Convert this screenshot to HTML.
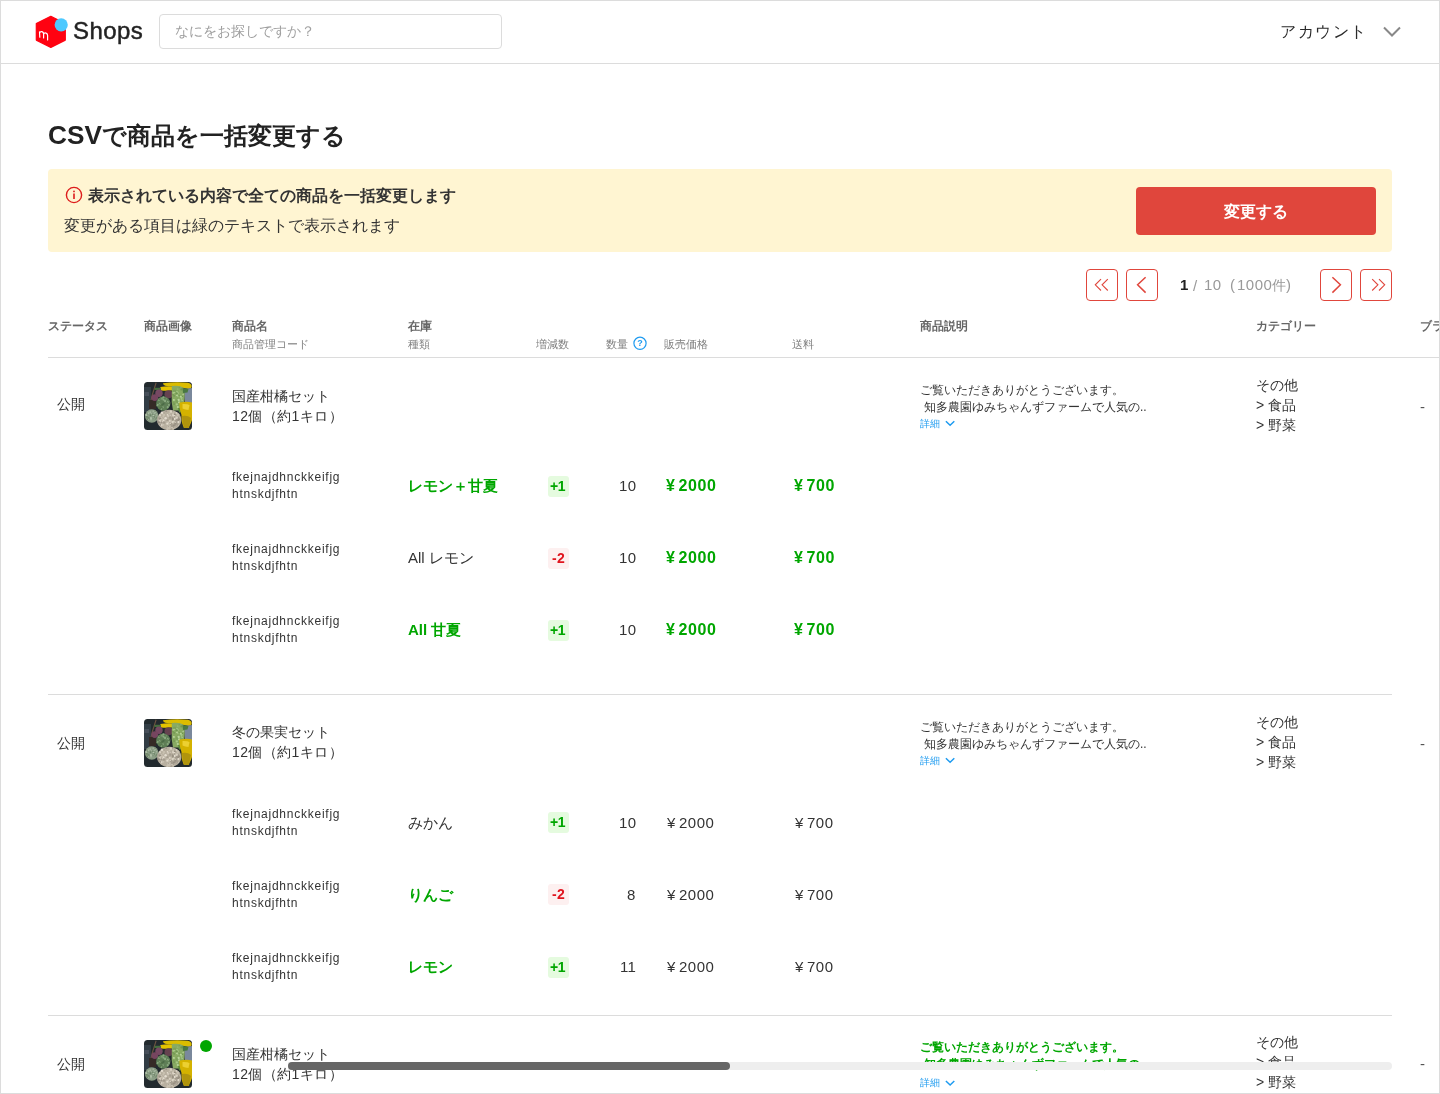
<!DOCTYPE html>
<html lang="ja"><head><meta charset="utf-8"><title>CSVで商品を一括変更する</title>
<style>
html,body{margin:0;padding:0;background:#fff;}
body{width:1440px;height:1094px;overflow:hidden;position:relative;font-family:"Liberation Sans",sans-serif;color:#333;}
.t{position:absolute;white-space:nowrap;will-change:transform;}
.box{position:absolute;box-sizing:border-box;}
svg{position:absolute;overflow:visible;}
</style></head><body>

<div class="box" style="left:0;top:0;width:1440px;height:1094px;border:1px solid #dcdcdc;"></div>
<div class="box" style="left:0;top:63px;width:1440px;height:1px;background:#dcdcdc;"></div>
<svg style="left:0;top:0" width="200" height="64" viewBox="0 0 200 64">
<path d="M50.8 16.3 L65.3 23.6 L65.3 40.1 L50.8 47.4 L36.3 40.1 L36.3 23.6 Z" fill="#ff0211" stroke="#ff0211" stroke-width="1.2" stroke-linejoin="round"/>
<circle cx="61.2" cy="24.8" r="6.6" fill="#4dc9ff"/>
<path d="M39.8 37.2 L39.5 31.8 M39.6 33.2 Q40 31.3 42 31.7 Q43.7 32.2 43.6 34.3 L43.6 38 M43.6 34.3 Q44.2 32.5 46 33.1 Q47.6 33.6 47.6 35.6 L47.6 40" fill="none" stroke="#fff" stroke-width="1.2" stroke-linecap="round"/>
</svg>
<div class="t" style="left:73px;top:16.4px;font-size:24px;line-height:30px;color:#222;font-weight:normal;letter-spacing:0.4px;-webkit-text-stroke:0.45px #222;">Shops</div>
<div class="box" style="left:159px;top:14px;width:343px;height:35px;border:1px solid #dcdcdc;border-radius:4px;"></div>
<div class="t" style="left:175px;top:21.0px;font-size:14px;line-height:20px;color:#a0a0a0;font-weight:normal;">なにをお探しですか？</div>
<div class="t" style="left:1280px;top:20.5px;font-size:16px;line-height:22px;color:#2a2a2a;font-weight:normal;letter-spacing:1.5px">アカウント</div>
<svg style="left:0;top:0" width="1440" height="64"><polyline points="1384,27.5 1392,35.5 1400,27.5" fill="none" stroke="#888" stroke-width="2"/></svg>
<div class="t" style="left:48px;top:120.0px;font-size:23.7px;line-height:30px;color:#222;font-weight:bold;"><span style="font-size:26.2px">CSV</span>で商品を一括変更する</div>
<div class="box" style="left:48px;top:169px;width:1344px;height:83px;background:#fff5d2;border-radius:4px;"></div>
<svg style="left:0;top:0" width="200" height="260"><circle cx="74" cy="195" r="7.6" fill="none" stroke="#dd1c1c" stroke-width="1.4"/><circle cx="74" cy="191.4" r="0.9" fill="#dd1c1c"/><line x1="74" y1="193.5" x2="74" y2="199" stroke="#dd1c1c" stroke-width="1.6"/></svg>
<div class="t" style="left:88px;top:184.6px;font-size:16px;line-height:22px;color:#333;font-weight:bold;">表示されている内容で全ての商品を一括変更します</div>
<div class="t" style="left:64px;top:214.5px;font-size:16px;line-height:22px;color:#333;font-weight:normal;">変更がある項目は緑のテキストで表示されます</div>
<div class="box" style="left:1136px;top:187px;width:240px;height:48px;background:#e0463c;border-radius:4px;"></div>
<div class="t" style="left:1136px;top:187.5px;width:240px;height:48px;line-height:48px;text-align:center;color:#fff;font-weight:bold;font-size:16px;">変更する</div>
<div class="box" style="left:1086px;top:269px;width:32px;height:32px;border:1px solid #e0463c;border-radius:4px;"></div>
<div class="box" style="left:1126px;top:269px;width:32px;height:32px;border:1px solid #e0463c;border-radius:4px;"></div>
<div class="box" style="left:1320px;top:269px;width:32px;height:32px;border:1px solid #e0463c;border-radius:4px;"></div>
<div class="box" style="left:1360px;top:269px;width:32px;height:32px;border:1px solid #e0463c;border-radius:4px;"></div>
<svg style="left:0;top:0" width="1440" height="320" fill="none" stroke="#e0463c">
<polyline points="1101,279.2 1095.3,284.8 1101,290.5" stroke-width="1.1"/>
<polyline points="1107.8,279.2 1102.1,284.8 1107.8,290.5" stroke-width="1.1"/>
<polyline points="1145.6,277.2 1137.6,284.8 1145.6,292.6" stroke-width="1.5"/>
<polyline points="1332.4,277.2 1340.4,284.8 1332.4,292.6" stroke-width="1.5"/>
<polyline points="1372.2,279.2 1377.9,284.8 1372.2,290.5" stroke-width="1.1"/>
<polyline points="1379,279.2 1384.7,284.8 1379,290.5" stroke-width="1.1"/>
</svg>
<div class="t" style="left:1179.5px;top:274.0px;font-size:15px;line-height:21px;color:#222;font-weight:bold;">1</div>
<div class="t" style="left:1192.5px;top:274.5px;font-size:15px;line-height:21px;color:#999;font-weight:normal;">/</div>
<div class="t" style="left:1204.2px;top:274.0px;font-size:15px;line-height:21px;color:#999;font-weight:normal;letter-spacing:0.5px">10</div>
<div class="t" style="left:1229.5px;top:274.0px;font-size:15px;line-height:21px;color:#999;font-weight:normal;">(</div>
<div class="t" style="left:1236.5px;top:274.0px;font-size:15px;line-height:21px;color:#999;font-weight:normal;letter-spacing:0.5px">1000</div>
<div class="t" style="left:1271.5px;top:274.5px;font-size:14px;line-height:20px;color:#999;font-weight:normal;">件</div>
<div class="t" style="left:1286px;top:274.0px;font-size:15px;line-height:21px;color:#999;font-weight:normal;">)</div>
<div class="t" style="left:48px;top:317.0px;font-size:12px;line-height:18px;color:#666;font-weight:bold;">ステータス</div>
<div class="t" style="left:144px;top:317.0px;font-size:12px;line-height:18px;color:#666;font-weight:bold;">商品画像</div>
<div class="t" style="left:232px;top:317.0px;font-size:12px;line-height:18px;color:#666;font-weight:bold;">商品名</div>
<div class="t" style="left:232px;top:335.5px;font-size:11px;line-height:17px;color:#808080;font-weight:normal;">商品管理コード</div>
<div class="t" style="left:408px;top:317.0px;font-size:12px;line-height:18px;color:#666;font-weight:bold;">在庫</div>
<div class="t" style="left:408px;top:335.5px;font-size:11px;line-height:17px;color:#808080;font-weight:normal;">種類</div>
<div class="t" style="left:536px;top:335.5px;font-size:11px;line-height:17px;color:#808080;font-weight:normal;">増減数</div>
<div class="t" style="left:606px;top:335.5px;font-size:11px;line-height:17px;color:#808080;font-weight:normal;">数量</div>
<svg style="left:0;top:0" width="1440" height="360"><circle cx="640" cy="343.3" r="6.1" fill="none" stroke="#1e9bf0" stroke-width="1.2"/></svg>
<div class="t" style="left:634px;top:336px;width:12px;text-align:center;font-size:9px;line-height:14px;font-weight:bold;color:#1e9bf0">?</div>
<div class="t" style="left:664px;top:335.5px;font-size:11px;line-height:17px;color:#808080;font-weight:normal;">販売価格</div>
<div class="t" style="left:792px;top:335.5px;font-size:11px;line-height:17px;color:#808080;font-weight:normal;">送料</div>
<div class="t" style="left:920px;top:317.0px;font-size:12px;line-height:18px;color:#666;font-weight:bold;">商品説明</div>
<div class="t" style="left:1256px;top:317.0px;font-size:12px;line-height:18px;color:#666;font-weight:bold;">カテゴリー</div>
<div class="t" style="left:1420px;top:317.0px;font-size:12px;line-height:18px;color:#666;font-weight:bold;">ブランド</div>
<div class="box" style="left:48px;top:357px;width:1392px;height:1px;background:#dcdcdc;"></div>
<div class="t" style="left:57px;top:394.0px;font-size:14px;line-height:20px;color:#333333;font-weight:normal;">公開</div>
<svg style="left:144px;top:382px" width="48" height="48" viewBox="0 0 48 48">
<defs><clipPath id="c144382"><rect width="48" height="48" rx="3.5"/></clipPath><filter id="b144382" x="-20%" y="-20%" width="140%" height="140%"><feGaussianBlur stdDeviation="0.45"/></filter></defs>
<g clip-path="url(#c144382)"><g filter="url(#b144382)"><rect width="48" height="48" fill="#242a2f"/><rect x="0" y="5" width="7" height="25" fill="#323c45"/><rect x="0.5" y="10" width="4.5" height="4" fill="#46505a"/><path d="M11.6 0.5 L12.6 1 L8.5 14 L6 26.5 L5 26 L7.5 13.5 Z" fill="#6e5440"/><rect x="5" y="18" width="7" height="9" fill="#352b28"/><path d="M19 1.2 Q32 -0.5 44 0.8 Q48.5 2 47.5 5.5 Q46 7.5 43 6.5 Q32 4.2 23 4 Q19 3.5 19 1.2 Z" fill="#dcbc00"/><path d="M16.5 5 Q23 3.8 30 4.5 L30.5 8.3 Q23 9.2 16.5 8.4 Q15.5 6.7 16.5 5 Z" fill="#e4c200"/><rect x="10.5" y="5.8" width="6.5" height="2.2" fill="#456e3c"/><circle cx="15" cy="11.3" r="3.7" fill="#774a63"/><circle cx="24.5" cy="12.2" r="4" fill="#654350"/><circle cx="10.8" cy="15.6" r="3.4" fill="#76445f"/><path d="M40 7 L48 6 L48 21 L41 21 Z" fill="#7a889c"/><path d="M27.8 4 Q36 3 39.5 6 Q41.5 12 40.5 18 Q40 25 36 28.5 L29 28.5 Q27 20 27.8 11 Z" fill="#88aa62"/><circle cx="34.3" cy="24.1" r="0.80" fill="#7ca05a"/><circle cx="33.0" cy="14.0" r="0.51" fill="#7ca05a"/><circle cx="33.8" cy="21.3" r="1.30" fill="#7ca05a"/><circle cx="30.1" cy="13.9" r="0.82" fill="#6e9450"/><circle cx="34.2" cy="20.3" r="1.24" fill="#7ca05a"/><circle cx="33.8" cy="7.0" r="0.55" fill="#a8c886"/><circle cx="33.7" cy="17.8" r="1.19" fill="#7ca05a"/><circle cx="29.6" cy="10.1" r="0.81" fill="#7ca05a"/><circle cx="30.1" cy="22.0" r="0.86" fill="#6e9450"/><circle cx="35.2" cy="13.6" r="0.61" fill="#6e9450"/><circle cx="33.8" cy="25.0" r="1.12" fill="#b8d49a"/><circle cx="29.6" cy="20.8" r="0.96" fill="#7ca05a"/><circle cx="29.5" cy="10.7" r="1.05" fill="#a8c886"/><circle cx="37.4" cy="7.4" r="1.04" fill="#6e9450"/><circle cx="33.0" cy="10.0" r="0.93" fill="#a8c886"/><circle cx="33.4" cy="11.1" r="1.17" fill="#b8d49a"/><circle cx="33.7" cy="18.7" r="1.18" fill="#7ca05a"/><circle cx="38.2" cy="21.2" r="0.83" fill="#6e9450"/><circle cx="37.6" cy="16.9" r="0.83" fill="#a8c886"/><circle cx="38.1" cy="18.4" r="0.54" fill="#b8d49a"/><circle cx="29.0" cy="12.7" r="0.72" fill="#6e9450"/><circle cx="37.1" cy="15.9" r="0.56" fill="#a8c886"/><circle cx="39.1" cy="12.6" r="0.73" fill="#b8d49a"/><circle cx="34.6" cy="17.9" r="1.19" fill="#b8d49a"/><circle cx="32.7" cy="19.1" r="1.19" fill="#7ca05a"/><circle cx="30.2" cy="18.0" r="1.02" fill="#a8c886"/><circle cx="30.1" cy="8.7" r="0.91" fill="#7ca05a"/><circle cx="30.9" cy="9.0" r="1.25" fill="#7ca05a"/><circle cx="37.9" cy="14.9" r="0.94" fill="#a8c886"/><circle cx="35.3" cy="5.4" r="0.75" fill="#7ca05a"/><circle cx="30.7" cy="10.2" r="0.55" fill="#b8d49a"/><circle cx="29.6" cy="17.9" r="0.78" fill="#b8d49a"/><circle cx="33.9" cy="14.4" r="0.55" fill="#a8c886"/><circle cx="36.7" cy="14.7" r="0.87" fill="#b8d49a"/><circle cx="35.0" cy="20.3" r="1.11" fill="#b8d49a"/><circle cx="32.9" cy="22.4" r="1.12" fill="#a8c886"/><circle cx="38.5" cy="14.4" r="0.61" fill="#6e9450"/><circle cx="32.4" cy="11.3" r="0.76" fill="#7ca05a"/><circle cx="33.0" cy="13.2" r="0.98" fill="#b8d49a"/><circle cx="32.8" cy="11.4" r="1.15" fill="#6e9450"/><path d="M38.5 6 L44.5 7 L43.5 10.5 L39 11 Z" fill="#4a7840"/><circle cx="19.3" cy="21.6" r="7.1" fill="#5e7e56"/><circle cx="15.3" cy="17.7" r="1.06" fill="#7e9c72"/><circle cx="22.4" cy="16.8" r="0.67" fill="#7e9c72"/><circle cx="21.1" cy="20.3" r="0.83" fill="#4c6a46"/><circle cx="17.8" cy="23.0" r="0.67" fill="#4c6a46"/><circle cx="17.0" cy="23.1" r="1.11" fill="#5a7a50"/><circle cx="22.4" cy="26.5" r="0.60" fill="#5a7a50"/><circle cx="19.5" cy="21.8" r="1.11" fill="#4c6a46"/><circle cx="20.2" cy="15.3" r="0.62" fill="#4c6a46"/><circle cx="17.7" cy="27.8" r="0.88" fill="#4c6a46"/><circle cx="22.0" cy="27.4" r="0.64" fill="#5a7a50"/><circle cx="18.1" cy="25.3" r="0.62" fill="#4c6a46"/><circle cx="19.0" cy="25.3" r="1.07" fill="#7e9c72"/><circle cx="14.8" cy="18.5" r="0.55" fill="#8aa880"/><circle cx="21.2" cy="17.5" r="0.72" fill="#5a7a50"/><circle cx="16.6" cy="22.1" r="0.68" fill="#7e9c72"/><circle cx="23.0" cy="20.4" r="0.78" fill="#5a7a50"/><circle cx="16.0" cy="25.3" r="0.51" fill="#7e9c72"/><circle cx="18.0" cy="16.6" r="1.17" fill="#7e9c72"/><circle cx="19.5" cy="15.3" r="1.16" fill="#8aa880"/><circle cx="13.2" cy="21.1" r="0.68" fill="#5a7a50"/><circle cx="23.7" cy="25.1" r="1.06" fill="#8aa880"/><circle cx="25.5" cy="23.0" r="0.56" fill="#8aa880"/><circle cx="15.4" cy="21.3" r="0.60" fill="#8aa880"/><circle cx="23.6" cy="19.4" r="0.72" fill="#8aa880"/><circle cx="17.3" cy="27.1" r="0.94" fill="#8aa880"/><circle cx="21.9" cy="21.5" r="0.53" fill="#5a7a50"/><circle cx="24.8" cy="22.7" r="0.74" fill="#8aa880"/><circle cx="15.2" cy="22.8" r="0.54" fill="#7e9c72"/><circle cx="20.5" cy="18.0" r="0.64" fill="#4c6a46"/><circle cx="15.4" cy="17.4" r="0.57" fill="#5a7a50"/><circle cx="18.2" cy="22.7" r="0.79" fill="#4c6a46"/><circle cx="13.1" cy="23.5" r="1.10" fill="#5a7a50"/><circle cx="24.5" cy="20.3" r="0.72" fill="#8aa880"/><circle cx="18.2" cy="25.6" r="0.60" fill="#5a7a50"/><circle cx="21.4" cy="17.3" r="0.63" fill="#5a7a50"/><circle cx="21.2" cy="19.6" r="0.84" fill="#8aa880"/><circle cx="24.6" cy="23.8" r="0.75" fill="#7e9c72"/><circle cx="19.5" cy="17.7" r="0.99" fill="#8aa880"/><circle cx="21.0" cy="18.7" r="1.19" fill="#8aa880"/><circle cx="23.0" cy="20.6" r="0.63" fill="#7e9c72"/><circle cx="13.7" cy="22.5" r="0.73" fill="#8aa880"/><circle cx="13.6" cy="23.0" r="0.95" fill="#8aa880"/><circle cx="16.3" cy="25.9" r="1.02" fill="#5a7a50"/><circle cx="15.8" cy="26.4" r="1.11" fill="#5a7a50"/><circle cx="25.6" cy="20.6" r="0.86" fill="#4c6a46"/><circle cx="7.8" cy="34" r="6.7" fill="#8c9e86"/><circle cx="6.8" cy="36.1" r="0.89" fill="#a8b8a0"/><circle cx="8.6" cy="32.3" r="0.85" fill="#6e8468"/><circle cx="11.6" cy="34.9" r="0.54" fill="#a8b8a0"/><circle cx="6.4" cy="33.5" r="0.84" fill="#6e8468"/><circle cx="4.7" cy="30.6" r="0.54" fill="#7c9274"/><circle cx="10.5" cy="34.9" r="0.83" fill="#6e8468"/><circle cx="7.2" cy="36.2" r="0.57" fill="#b4c4ac"/><circle cx="3.2" cy="32.2" r="0.56" fill="#6e8468"/><circle cx="4.7" cy="37.2" r="0.54" fill="#a8b8a0"/><circle cx="4.7" cy="31.1" r="0.82" fill="#b4c4ac"/><circle cx="2.2" cy="35.2" r="0.72" fill="#6e8468"/><circle cx="9.2" cy="29.2" r="0.65" fill="#b4c4ac"/><circle cx="2.3" cy="33.1" r="0.94" fill="#b4c4ac"/><circle cx="6.5" cy="33.0" r="0.81" fill="#6e8468"/><circle cx="7.9" cy="31.7" r="0.79" fill="#a8b8a0"/><circle cx="9.4" cy="33.6" r="0.83" fill="#b4c4ac"/><circle cx="5.9" cy="37.0" r="0.80" fill="#7c9274"/><circle cx="9.5" cy="34.8" r="0.66" fill="#a8b8a0"/><circle cx="12.5" cy="35.9" r="0.89" fill="#7c9274"/><circle cx="7.0" cy="37.6" r="0.90" fill="#a8b8a0"/><circle cx="11.1" cy="32.7" r="0.87" fill="#7c9274"/><circle cx="12.7" cy="35.9" r="0.58" fill="#6e8468"/><circle cx="3.2" cy="37.4" r="0.80" fill="#6e8468"/><circle cx="3.6" cy="35.4" r="1.03" fill="#7c9274"/><circle cx="9.9" cy="31.6" r="0.75" fill="#b4c4ac"/><circle cx="6.3" cy="30.6" r="0.64" fill="#a8b8a0"/><circle cx="9.1" cy="36.6" r="0.64" fill="#7c9274"/><circle cx="9.0" cy="31.8" r="0.67" fill="#6e8468"/><circle cx="4.6" cy="35.8" r="0.84" fill="#6e8468"/><circle cx="6.2" cy="30.0" r="0.87" fill="#a8b8a0"/><circle cx="2.4" cy="35.5" r="1.07" fill="#7c9274"/><circle cx="4.8" cy="36.3" r="0.79" fill="#7c9274"/><circle cx="9.2" cy="34.6" r="0.63" fill="#6e8468"/><circle cx="11.4" cy="37.0" r="0.56" fill="#6e8468"/><circle cx="2.1" cy="32.7" r="0.87" fill="#a8b8a0"/><circle cx="11.1" cy="30.7" r="0.59" fill="#b4c4ac"/><circle cx="12.3" cy="32.7" r="0.78" fill="#a8b8a0"/><circle cx="11.3" cy="29.1" r="0.78" fill="#7c9274"/><circle cx="6.9" cy="36.1" r="0.95" fill="#b4c4ac"/><circle cx="2.9" cy="34.7" r="0.81" fill="#6e8468"/><path d="M34 26 L40.5 25.8 L40 30 L35 30.5 Z" fill="#5a8a3c"/><path d="M35.5 20.5 Q43 19 48 20.5 L48 38 Q46 44 44 46 L40 46 Q37 40 37.5 33 Q35 27 35.5 20.5 Z" fill="#d4b200"/><path d="M38 34 Q44 33 47 36 L45 46 L40 46 Q38 40 38 34 Z" fill="#b0940e"/><path d="M38.5 22 Q43 21.5 45.5 23 L44.5 28 Q41 27.5 38.5 26.5 Z" fill="#ecd030"/><ellipse cx="25.2" cy="38" rx="12.1" ry="10.3" fill="#b8b0a0"/><circle cx="17.1" cy="40.1" r="1.25" fill="#968e80"/><circle cx="15.2" cy="40.6" r="0.73" fill="#c8c0b0"/><circle cx="16.4" cy="39.1" r="0.73" fill="#968e80"/><circle cx="24.1" cy="40.7" r="1.17" fill="#d8d0c2"/><circle cx="19.3" cy="34.6" r="0.92" fill="#c8c0b0"/><circle cx="20.0" cy="31.9" r="1.18" fill="#d8d0c2"/><circle cx="29.8" cy="39.5" r="0.77" fill="#d8d0c2"/><circle cx="26.3" cy="32.6" r="1.01" fill="#a49c8e"/><circle cx="16.2" cy="37.1" r="0.95" fill="#d8d0c2"/><circle cx="19.5" cy="39.3" r="1.30" fill="#d8d0c2"/><circle cx="23.5" cy="32.8" r="0.76" fill="#e4ddd0"/><circle cx="33.5" cy="39.3" r="0.68" fill="#d8d0c2"/><circle cx="29.2" cy="33.1" r="1.27" fill="#d8d0c2"/><circle cx="27.7" cy="47.0" r="0.64" fill="#968e80"/><circle cx="32.3" cy="37.3" r="0.65" fill="#a49c8e"/><circle cx="26.2" cy="33.1" r="0.66" fill="#e4ddd0"/><circle cx="32.4" cy="38.6" r="1.25" fill="#a49c8e"/><circle cx="25.3" cy="41.1" r="0.64" fill="#968e80"/><circle cx="28.9" cy="44.5" r="0.91" fill="#a49c8e"/><circle cx="35.1" cy="37.2" r="0.89" fill="#968e80"/><circle cx="30.7" cy="42.2" r="0.75" fill="#e4ddd0"/><circle cx="32.5" cy="30.9" r="1.01" fill="#d8d0c2"/><circle cx="26.9" cy="43.8" r="1.20" fill="#c8c0b0"/><circle cx="34.3" cy="43.6" r="0.75" fill="#e4ddd0"/><circle cx="34.0" cy="38.5" r="1.18" fill="#968e80"/><circle cx="28.2" cy="39.3" r="1.01" fill="#a49c8e"/><circle cx="32.0" cy="38.6" r="1.04" fill="#a49c8e"/><circle cx="32.8" cy="36.3" r="1.00" fill="#968e80"/><circle cx="27.0" cy="41.4" r="1.24" fill="#c8c0b0"/><circle cx="25.2" cy="42.2" r="1.12" fill="#c8c0b0"/><circle cx="28.8" cy="46.8" r="1.22" fill="#c8c0b0"/><circle cx="27.4" cy="39.0" r="0.68" fill="#c8c0b0"/><circle cx="30.6" cy="36.9" r="1.09" fill="#e4ddd0"/><circle cx="15.8" cy="42.4" r="0.94" fill="#c8c0b0"/><circle cx="29.5" cy="45.3" r="0.65" fill="#a49c8e"/><circle cx="16.1" cy="39.0" r="1.03" fill="#d8d0c2"/><circle cx="23.2" cy="47.0" r="0.74" fill="#d8d0c2"/><circle cx="31.8" cy="40.6" r="0.77" fill="#d8d0c2"/><circle cx="28.3" cy="43.2" r="1.00" fill="#a49c8e"/><circle cx="28.7" cy="40.0" r="0.92" fill="#e4ddd0"/><circle cx="20.0" cy="31.3" r="1.01" fill="#a49c8e"/><circle cx="16.0" cy="33.1" r="0.93" fill="#e4ddd0"/><circle cx="21.8" cy="29.0" r="0.61" fill="#d8d0c2"/><circle cx="15.6" cy="38.9" r="0.82" fill="#d8d0c2"/><circle cx="32.6" cy="41.2" r="1.12" fill="#a49c8e"/><circle cx="28.1" cy="29.2" r="0.85" fill="#968e80"/><circle cx="33.8" cy="32.8" r="0.89" fill="#d8d0c2"/><circle cx="30.8" cy="32.5" r="1.04" fill="#968e80"/><circle cx="24.3" cy="38.7" r="0.65" fill="#d8d0c2"/><circle cx="18.0" cy="30.7" r="1.22" fill="#e4ddd0"/><circle cx="17.8" cy="43.3" r="1.01" fill="#968e80"/><circle cx="17.1" cy="39.6" r="0.96" fill="#c8c0b0"/><circle cx="33.8" cy="39.4" r="0.94" fill="#a49c8e"/><circle cx="28.9" cy="37.1" r="1.15" fill="#968e80"/><circle cx="25.2" cy="39.0" r="0.81" fill="#c8c0b0"/><circle cx="26.6" cy="41.8" r="1.23" fill="#968e80"/><circle cx="19.6" cy="38.1" r="0.88" fill="#e4ddd0"/><circle cx="27.6" cy="44.0" r="1.16" fill="#a49c8e"/><circle cx="30.3" cy="33.9" r="1.01" fill="#e4ddd0"/><circle cx="26.2" cy="41.4" r="0.85" fill="#d8d0c2"/><circle cx="22.5" cy="28.9" r="0.79" fill="#a49c8e"/><circle cx="31.1" cy="42.3" r="1.25" fill="#968e80"/><circle cx="19.2" cy="42.7" r="1.07" fill="#c8c0b0"/><circle cx="22.2" cy="38.8" r="0.62" fill="#c8c0b0"/><circle cx="34.4" cy="40.1" r="1.00" fill="#e4ddd0"/><circle cx="20.2" cy="32.2" r="1.05" fill="#968e80"/><circle cx="23.5" cy="38.4" r="1.18" fill="#a49c8e"/><circle cx="27.0" cy="29.6" r="1.29" fill="#d8d0c2"/><circle cx="16.7" cy="40.5" r="1.06" fill="#e4ddd0"/><circle cx="34.2" cy="36.0" r="0.74" fill="#968e80"/><circle cx="24.8" cy="46.1" r="1.13" fill="#c8c0b0"/><circle cx="24.1" cy="34.0" r="0.79" fill="#e4ddd0"/><circle cx="14.5" cy="35.7" r="0.95" fill="#a49c8e"/><circle cx="17.3" cy="43.3" r="1.23" fill="#d8d0c2"/><circle cx="16.2" cy="42.8" r="0.87" fill="#968e80"/><circle cx="16.6" cy="40.2" r="1.24" fill="#968e80"/><circle cx="16.5" cy="35.6" r="0.95" fill="#e4ddd0"/><circle cx="16.3" cy="39.8" r="0.74" fill="#d8d0c2"/><circle cx="27.7" cy="46.9" r="1.29" fill="#e4ddd0"/><circle cx="15.4" cy="36.0" r="0.82" fill="#d8d0c2"/><circle cx="23.3" cy="40.2" r="0.91" fill="#c8c0b0"/><circle cx="20.0" cy="40.4" r="1.24" fill="#a49c8e"/><circle cx="26.2" cy="35.7" r="1.16" fill="#a49c8e"/><circle cx="16.0" cy="36.4" r="1.24" fill="#968e80"/><circle cx="30.0" cy="43.5" r="1.11" fill="#968e80"/><circle cx="32.7" cy="35.7" r="1.26" fill="#d8d0c2"/><circle cx="25.6" cy="31.6" r="0.99" fill="#c8c0b0"/><circle cx="19.9" cy="32.7" r="1.19" fill="#c8c0b0"/><circle cx="24.8" cy="45.9" r="1.27" fill="#c8c0b0"/><circle cx="27.9" cy="46.6" r="1.28" fill="#c8c0b0"/><circle cx="24.1" cy="44.7" r="0.89" fill="#d8d0c2"/><circle cx="16.4" cy="37.9" r="0.62" fill="#d8d0c2"/><circle cx="18.1" cy="37.4" r="1.16" fill="#c8c0b0"/><circle cx="27.7" cy="40.0" r="0.72" fill="#c8c0b0"/><circle cx="14.7" cy="40.4" r="1.16" fill="#968e80"/><circle cx="24.3" cy="44.6" r="0.69" fill="#968e80"/><circle cx="34.1" cy="32.6" r="1.24" fill="#c8c0b0"/><circle cx="23.2" cy="41.8" r="1.03" fill="#e4ddd0"/><circle cx="32.1" cy="44.2" r="0.62" fill="#a49c8e"/><circle cx="25.9" cy="38.9" r="0.80" fill="#e4ddd0"/><circle cx="25.5" cy="44.8" r="0.95" fill="#c8c0b0"/><circle cx="31.0" cy="42.8" r="0.78" fill="#a49c8e"/><circle cx="22.0" cy="29.4" r="0.62" fill="#968e80"/><circle cx="29.2" cy="31.3" r="0.98" fill="#c8c0b0"/><circle cx="19.9" cy="32.7" r="1.20" fill="#c8c0b0"/><circle cx="21.6" cy="36.2" r="1.24" fill="#e4ddd0"/><circle cx="30.4" cy="34.9" r="0.82" fill="#a49c8e"/><circle cx="27.4" cy="47.4" r="1.22" fill="#a49c8e"/><circle cx="28.4" cy="35.8" r="0.66" fill="#968e80"/><circle cx="33.7" cy="43.0" r="0.90" fill="#a49c8e"/></g></g></svg>
<div class="t" style="left:232px;top:386.0px;font-size:14px;line-height:20px;color:#333333;font-weight:normal;">国産柑橘セット</div>
<div class="t" style="left:232px;top:406.0px;font-size:14px;line-height:20px;color:#333333;font-weight:normal;letter-spacing:0.4px">12個（約1キロ）</div>
<div class="t" style="left:920px;top:381.5px;font-size:12px;line-height:17px;color:#333333;font-weight:normal;">ご覧いただきありがとうございます。</div>
<div class="t" style="left:924px;top:399.0px;font-size:12px;line-height:17px;color:#333333;font-weight:normal;">知多農園ゆみちゃんずファームで人気の..</div>
<div class="t" style="left:920px;top:416.5px;font-size:10px;line-height:14px;color:#1e9bf0;font-weight:normal;">詳細</div>
<svg style="left:0;top:0" width="1440" height="1094"><polyline points="945.9,421.2 950.1,425.2 954.3,421.2" fill="none" stroke="#1e9bf0" stroke-width="1.5"/></svg>
<div class="t" style="left:1256px;top:374.7px;font-size:14px;line-height:20px;color:#333333;font-weight:normal;">その他</div>
<div class="t" style="left:1256px;top:394.7px;font-size:14px;line-height:20px;color:#333333;font-weight:normal;">&gt; 食品</div>
<div class="t" style="left:1256px;top:414.7px;font-size:14px;line-height:20px;color:#333333;font-weight:normal;">&gt; 野菜</div>
<div class="t" style="left:1420px;top:396.8px;font-size:15px;line-height:20px;color:#555;font-weight:normal;">-</div>
<div class="t" style="left:232px;top:469.2px;font-size:12px;line-height:17px;color:#333333;font-weight:normal;letter-spacing:0.75px">fkejnajdhnckkeifjg</div>
<div class="t" style="left:232px;top:486.2px;font-size:12px;line-height:17px;color:#333333;font-weight:normal;letter-spacing:0.75px">htnskdjfhtn</div>
<div class="t" style="left:408px;top:475.0px;font-size:15px;line-height:21px;color:#00a600;font-weight:bold;">レモン＋甘夏</div>
<div class="box" style="left:548px;top:475.5px;width:21px;height:21px;border-radius:3px;background:#e5fbdf"></div>
<div class="t" style="left:547px;top:475.5px;width:21px;text-align:center;font-size:14px;line-height:21px;font-weight:bold;color:#00a600;letter-spacing:-0.6px">+1</div>
<div class="t" style="right:804px;top:475.0px;font-size:15px;line-height:21px;color:#333333;font-weight:normal;text-align:right;letter-spacing:0.3px">10</div>
<div class="t" style="left:665.5px;top:474.5px;font-size:16px;line-height:22px;color:#00a600;font-weight:bold;letter-spacing:0.6px">¥<span style="margin-left:3px">2000</span></div>
<div class="t" style="left:793.5px;top:474.5px;font-size:16px;line-height:22px;color:#00a600;font-weight:bold;letter-spacing:0.6px">¥<span style="margin-left:3px">700</span></div>
<div class="t" style="left:232px;top:541.2px;font-size:12px;line-height:17px;color:#333333;font-weight:normal;letter-spacing:0.75px">fkejnajdhnckkeifjg</div>
<div class="t" style="left:232px;top:558.2px;font-size:12px;line-height:17px;color:#333333;font-weight:normal;letter-spacing:0.75px">htnskdjfhtn</div>
<div class="t" style="left:408px;top:547.0px;font-size:15px;line-height:21px;color:#333333;font-weight:normal;">All レモン</div>
<div class="box" style="left:548px;top:547.5px;width:21px;height:21px;border-radius:3px;background:#fdf0f0"></div>
<div class="t" style="left:547.8px;top:547.5px;width:21px;text-align:center;font-size:14px;line-height:21px;font-weight:bold;color:#e0141e;letter-spacing:0.3px">-2</div>
<div class="t" style="right:804px;top:547.0px;font-size:15px;line-height:21px;color:#333333;font-weight:normal;text-align:right;letter-spacing:0.3px">10</div>
<div class="t" style="left:665.5px;top:546.5px;font-size:16px;line-height:22px;color:#00a600;font-weight:bold;letter-spacing:0.6px">¥<span style="margin-left:3px">2000</span></div>
<div class="t" style="left:793.5px;top:546.5px;font-size:16px;line-height:22px;color:#00a600;font-weight:bold;letter-spacing:0.6px">¥<span style="margin-left:3px">700</span></div>
<div class="t" style="left:232px;top:613.2px;font-size:12px;line-height:17px;color:#333333;font-weight:normal;letter-spacing:0.75px">fkejnajdhnckkeifjg</div>
<div class="t" style="left:232px;top:630.2px;font-size:12px;line-height:17px;color:#333333;font-weight:normal;letter-spacing:0.75px">htnskdjfhtn</div>
<div class="t" style="left:408px;top:619.0px;font-size:15px;line-height:21px;color:#00a600;font-weight:bold;">All 甘夏</div>
<div class="box" style="left:548px;top:619.5px;width:21px;height:21px;border-radius:3px;background:#e5fbdf"></div>
<div class="t" style="left:547px;top:619.5px;width:21px;text-align:center;font-size:14px;line-height:21px;font-weight:bold;color:#00a600;letter-spacing:-0.6px">+1</div>
<div class="t" style="right:804px;top:619.0px;font-size:15px;line-height:21px;color:#333333;font-weight:normal;text-align:right;letter-spacing:0.3px">10</div>
<div class="t" style="left:665.5px;top:618.5px;font-size:16px;line-height:22px;color:#00a600;font-weight:bold;letter-spacing:0.6px">¥<span style="margin-left:3px">2000</span></div>
<div class="t" style="left:793.5px;top:618.5px;font-size:16px;line-height:22px;color:#00a600;font-weight:bold;letter-spacing:0.6px">¥<span style="margin-left:3px">700</span></div>
<div class="box" style="left:48px;top:694px;width:1344px;height:1px;background:#dcdcdc;"></div>
<div class="t" style="left:57px;top:732.5px;font-size:14px;line-height:20px;color:#333333;font-weight:normal;">公開</div>
<svg style="left:144px;top:719px" width="48" height="48" viewBox="0 0 48 48">
<defs><clipPath id="c144719"><rect width="48" height="48" rx="3.5"/></clipPath><filter id="b144719" x="-20%" y="-20%" width="140%" height="140%"><feGaussianBlur stdDeviation="0.45"/></filter></defs>
<g clip-path="url(#c144719)"><g filter="url(#b144719)"><rect width="48" height="48" fill="#242a2f"/><rect x="0" y="5" width="7" height="25" fill="#323c45"/><rect x="0.5" y="10" width="4.5" height="4" fill="#46505a"/><path d="M11.6 0.5 L12.6 1 L8.5 14 L6 26.5 L5 26 L7.5 13.5 Z" fill="#6e5440"/><rect x="5" y="18" width="7" height="9" fill="#352b28"/><path d="M19 1.2 Q32 -0.5 44 0.8 Q48.5 2 47.5 5.5 Q46 7.5 43 6.5 Q32 4.2 23 4 Q19 3.5 19 1.2 Z" fill="#dcbc00"/><path d="M16.5 5 Q23 3.8 30 4.5 L30.5 8.3 Q23 9.2 16.5 8.4 Q15.5 6.7 16.5 5 Z" fill="#e4c200"/><rect x="10.5" y="5.8" width="6.5" height="2.2" fill="#456e3c"/><circle cx="15" cy="11.3" r="3.7" fill="#774a63"/><circle cx="24.5" cy="12.2" r="4" fill="#654350"/><circle cx="10.8" cy="15.6" r="3.4" fill="#76445f"/><path d="M40 7 L48 6 L48 21 L41 21 Z" fill="#7a889c"/><path d="M27.8 4 Q36 3 39.5 6 Q41.5 12 40.5 18 Q40 25 36 28.5 L29 28.5 Q27 20 27.8 11 Z" fill="#88aa62"/><circle cx="34.3" cy="24.1" r="0.80" fill="#7ca05a"/><circle cx="33.0" cy="14.0" r="0.51" fill="#7ca05a"/><circle cx="33.8" cy="21.3" r="1.30" fill="#7ca05a"/><circle cx="30.1" cy="13.9" r="0.82" fill="#6e9450"/><circle cx="34.2" cy="20.3" r="1.24" fill="#7ca05a"/><circle cx="33.8" cy="7.0" r="0.55" fill="#a8c886"/><circle cx="33.7" cy="17.8" r="1.19" fill="#7ca05a"/><circle cx="29.6" cy="10.1" r="0.81" fill="#7ca05a"/><circle cx="30.1" cy="22.0" r="0.86" fill="#6e9450"/><circle cx="35.2" cy="13.6" r="0.61" fill="#6e9450"/><circle cx="33.8" cy="25.0" r="1.12" fill="#b8d49a"/><circle cx="29.6" cy="20.8" r="0.96" fill="#7ca05a"/><circle cx="29.5" cy="10.7" r="1.05" fill="#a8c886"/><circle cx="37.4" cy="7.4" r="1.04" fill="#6e9450"/><circle cx="33.0" cy="10.0" r="0.93" fill="#a8c886"/><circle cx="33.4" cy="11.1" r="1.17" fill="#b8d49a"/><circle cx="33.7" cy="18.7" r="1.18" fill="#7ca05a"/><circle cx="38.2" cy="21.2" r="0.83" fill="#6e9450"/><circle cx="37.6" cy="16.9" r="0.83" fill="#a8c886"/><circle cx="38.1" cy="18.4" r="0.54" fill="#b8d49a"/><circle cx="29.0" cy="12.7" r="0.72" fill="#6e9450"/><circle cx="37.1" cy="15.9" r="0.56" fill="#a8c886"/><circle cx="39.1" cy="12.6" r="0.73" fill="#b8d49a"/><circle cx="34.6" cy="17.9" r="1.19" fill="#b8d49a"/><circle cx="32.7" cy="19.1" r="1.19" fill="#7ca05a"/><circle cx="30.2" cy="18.0" r="1.02" fill="#a8c886"/><circle cx="30.1" cy="8.7" r="0.91" fill="#7ca05a"/><circle cx="30.9" cy="9.0" r="1.25" fill="#7ca05a"/><circle cx="37.9" cy="14.9" r="0.94" fill="#a8c886"/><circle cx="35.3" cy="5.4" r="0.75" fill="#7ca05a"/><circle cx="30.7" cy="10.2" r="0.55" fill="#b8d49a"/><circle cx="29.6" cy="17.9" r="0.78" fill="#b8d49a"/><circle cx="33.9" cy="14.4" r="0.55" fill="#a8c886"/><circle cx="36.7" cy="14.7" r="0.87" fill="#b8d49a"/><circle cx="35.0" cy="20.3" r="1.11" fill="#b8d49a"/><circle cx="32.9" cy="22.4" r="1.12" fill="#a8c886"/><circle cx="38.5" cy="14.4" r="0.61" fill="#6e9450"/><circle cx="32.4" cy="11.3" r="0.76" fill="#7ca05a"/><circle cx="33.0" cy="13.2" r="0.98" fill="#b8d49a"/><circle cx="32.8" cy="11.4" r="1.15" fill="#6e9450"/><path d="M38.5 6 L44.5 7 L43.5 10.5 L39 11 Z" fill="#4a7840"/><circle cx="19.3" cy="21.6" r="7.1" fill="#5e7e56"/><circle cx="15.3" cy="17.7" r="1.06" fill="#7e9c72"/><circle cx="22.4" cy="16.8" r="0.67" fill="#7e9c72"/><circle cx="21.1" cy="20.3" r="0.83" fill="#4c6a46"/><circle cx="17.8" cy="23.0" r="0.67" fill="#4c6a46"/><circle cx="17.0" cy="23.1" r="1.11" fill="#5a7a50"/><circle cx="22.4" cy="26.5" r="0.60" fill="#5a7a50"/><circle cx="19.5" cy="21.8" r="1.11" fill="#4c6a46"/><circle cx="20.2" cy="15.3" r="0.62" fill="#4c6a46"/><circle cx="17.7" cy="27.8" r="0.88" fill="#4c6a46"/><circle cx="22.0" cy="27.4" r="0.64" fill="#5a7a50"/><circle cx="18.1" cy="25.3" r="0.62" fill="#4c6a46"/><circle cx="19.0" cy="25.3" r="1.07" fill="#7e9c72"/><circle cx="14.8" cy="18.5" r="0.55" fill="#8aa880"/><circle cx="21.2" cy="17.5" r="0.72" fill="#5a7a50"/><circle cx="16.6" cy="22.1" r="0.68" fill="#7e9c72"/><circle cx="23.0" cy="20.4" r="0.78" fill="#5a7a50"/><circle cx="16.0" cy="25.3" r="0.51" fill="#7e9c72"/><circle cx="18.0" cy="16.6" r="1.17" fill="#7e9c72"/><circle cx="19.5" cy="15.3" r="1.16" fill="#8aa880"/><circle cx="13.2" cy="21.1" r="0.68" fill="#5a7a50"/><circle cx="23.7" cy="25.1" r="1.06" fill="#8aa880"/><circle cx="25.5" cy="23.0" r="0.56" fill="#8aa880"/><circle cx="15.4" cy="21.3" r="0.60" fill="#8aa880"/><circle cx="23.6" cy="19.4" r="0.72" fill="#8aa880"/><circle cx="17.3" cy="27.1" r="0.94" fill="#8aa880"/><circle cx="21.9" cy="21.5" r="0.53" fill="#5a7a50"/><circle cx="24.8" cy="22.7" r="0.74" fill="#8aa880"/><circle cx="15.2" cy="22.8" r="0.54" fill="#7e9c72"/><circle cx="20.5" cy="18.0" r="0.64" fill="#4c6a46"/><circle cx="15.4" cy="17.4" r="0.57" fill="#5a7a50"/><circle cx="18.2" cy="22.7" r="0.79" fill="#4c6a46"/><circle cx="13.1" cy="23.5" r="1.10" fill="#5a7a50"/><circle cx="24.5" cy="20.3" r="0.72" fill="#8aa880"/><circle cx="18.2" cy="25.6" r="0.60" fill="#5a7a50"/><circle cx="21.4" cy="17.3" r="0.63" fill="#5a7a50"/><circle cx="21.2" cy="19.6" r="0.84" fill="#8aa880"/><circle cx="24.6" cy="23.8" r="0.75" fill="#7e9c72"/><circle cx="19.5" cy="17.7" r="0.99" fill="#8aa880"/><circle cx="21.0" cy="18.7" r="1.19" fill="#8aa880"/><circle cx="23.0" cy="20.6" r="0.63" fill="#7e9c72"/><circle cx="13.7" cy="22.5" r="0.73" fill="#8aa880"/><circle cx="13.6" cy="23.0" r="0.95" fill="#8aa880"/><circle cx="16.3" cy="25.9" r="1.02" fill="#5a7a50"/><circle cx="15.8" cy="26.4" r="1.11" fill="#5a7a50"/><circle cx="25.6" cy="20.6" r="0.86" fill="#4c6a46"/><circle cx="7.8" cy="34" r="6.7" fill="#8c9e86"/><circle cx="6.8" cy="36.1" r="0.89" fill="#a8b8a0"/><circle cx="8.6" cy="32.3" r="0.85" fill="#6e8468"/><circle cx="11.6" cy="34.9" r="0.54" fill="#a8b8a0"/><circle cx="6.4" cy="33.5" r="0.84" fill="#6e8468"/><circle cx="4.7" cy="30.6" r="0.54" fill="#7c9274"/><circle cx="10.5" cy="34.9" r="0.83" fill="#6e8468"/><circle cx="7.2" cy="36.2" r="0.57" fill="#b4c4ac"/><circle cx="3.2" cy="32.2" r="0.56" fill="#6e8468"/><circle cx="4.7" cy="37.2" r="0.54" fill="#a8b8a0"/><circle cx="4.7" cy="31.1" r="0.82" fill="#b4c4ac"/><circle cx="2.2" cy="35.2" r="0.72" fill="#6e8468"/><circle cx="9.2" cy="29.2" r="0.65" fill="#b4c4ac"/><circle cx="2.3" cy="33.1" r="0.94" fill="#b4c4ac"/><circle cx="6.5" cy="33.0" r="0.81" fill="#6e8468"/><circle cx="7.9" cy="31.7" r="0.79" fill="#a8b8a0"/><circle cx="9.4" cy="33.6" r="0.83" fill="#b4c4ac"/><circle cx="5.9" cy="37.0" r="0.80" fill="#7c9274"/><circle cx="9.5" cy="34.8" r="0.66" fill="#a8b8a0"/><circle cx="12.5" cy="35.9" r="0.89" fill="#7c9274"/><circle cx="7.0" cy="37.6" r="0.90" fill="#a8b8a0"/><circle cx="11.1" cy="32.7" r="0.87" fill="#7c9274"/><circle cx="12.7" cy="35.9" r="0.58" fill="#6e8468"/><circle cx="3.2" cy="37.4" r="0.80" fill="#6e8468"/><circle cx="3.6" cy="35.4" r="1.03" fill="#7c9274"/><circle cx="9.9" cy="31.6" r="0.75" fill="#b4c4ac"/><circle cx="6.3" cy="30.6" r="0.64" fill="#a8b8a0"/><circle cx="9.1" cy="36.6" r="0.64" fill="#7c9274"/><circle cx="9.0" cy="31.8" r="0.67" fill="#6e8468"/><circle cx="4.6" cy="35.8" r="0.84" fill="#6e8468"/><circle cx="6.2" cy="30.0" r="0.87" fill="#a8b8a0"/><circle cx="2.4" cy="35.5" r="1.07" fill="#7c9274"/><circle cx="4.8" cy="36.3" r="0.79" fill="#7c9274"/><circle cx="9.2" cy="34.6" r="0.63" fill="#6e8468"/><circle cx="11.4" cy="37.0" r="0.56" fill="#6e8468"/><circle cx="2.1" cy="32.7" r="0.87" fill="#a8b8a0"/><circle cx="11.1" cy="30.7" r="0.59" fill="#b4c4ac"/><circle cx="12.3" cy="32.7" r="0.78" fill="#a8b8a0"/><circle cx="11.3" cy="29.1" r="0.78" fill="#7c9274"/><circle cx="6.9" cy="36.1" r="0.95" fill="#b4c4ac"/><circle cx="2.9" cy="34.7" r="0.81" fill="#6e8468"/><path d="M34 26 L40.5 25.8 L40 30 L35 30.5 Z" fill="#5a8a3c"/><path d="M35.5 20.5 Q43 19 48 20.5 L48 38 Q46 44 44 46 L40 46 Q37 40 37.5 33 Q35 27 35.5 20.5 Z" fill="#d4b200"/><path d="M38 34 Q44 33 47 36 L45 46 L40 46 Q38 40 38 34 Z" fill="#b0940e"/><path d="M38.5 22 Q43 21.5 45.5 23 L44.5 28 Q41 27.5 38.5 26.5 Z" fill="#ecd030"/><ellipse cx="25.2" cy="38" rx="12.1" ry="10.3" fill="#b8b0a0"/><circle cx="17.1" cy="40.1" r="1.25" fill="#968e80"/><circle cx="15.2" cy="40.6" r="0.73" fill="#c8c0b0"/><circle cx="16.4" cy="39.1" r="0.73" fill="#968e80"/><circle cx="24.1" cy="40.7" r="1.17" fill="#d8d0c2"/><circle cx="19.3" cy="34.6" r="0.92" fill="#c8c0b0"/><circle cx="20.0" cy="31.9" r="1.18" fill="#d8d0c2"/><circle cx="29.8" cy="39.5" r="0.77" fill="#d8d0c2"/><circle cx="26.3" cy="32.6" r="1.01" fill="#a49c8e"/><circle cx="16.2" cy="37.1" r="0.95" fill="#d8d0c2"/><circle cx="19.5" cy="39.3" r="1.30" fill="#d8d0c2"/><circle cx="23.5" cy="32.8" r="0.76" fill="#e4ddd0"/><circle cx="33.5" cy="39.3" r="0.68" fill="#d8d0c2"/><circle cx="29.2" cy="33.1" r="1.27" fill="#d8d0c2"/><circle cx="27.7" cy="47.0" r="0.64" fill="#968e80"/><circle cx="32.3" cy="37.3" r="0.65" fill="#a49c8e"/><circle cx="26.2" cy="33.1" r="0.66" fill="#e4ddd0"/><circle cx="32.4" cy="38.6" r="1.25" fill="#a49c8e"/><circle cx="25.3" cy="41.1" r="0.64" fill="#968e80"/><circle cx="28.9" cy="44.5" r="0.91" fill="#a49c8e"/><circle cx="35.1" cy="37.2" r="0.89" fill="#968e80"/><circle cx="30.7" cy="42.2" r="0.75" fill="#e4ddd0"/><circle cx="32.5" cy="30.9" r="1.01" fill="#d8d0c2"/><circle cx="26.9" cy="43.8" r="1.20" fill="#c8c0b0"/><circle cx="34.3" cy="43.6" r="0.75" fill="#e4ddd0"/><circle cx="34.0" cy="38.5" r="1.18" fill="#968e80"/><circle cx="28.2" cy="39.3" r="1.01" fill="#a49c8e"/><circle cx="32.0" cy="38.6" r="1.04" fill="#a49c8e"/><circle cx="32.8" cy="36.3" r="1.00" fill="#968e80"/><circle cx="27.0" cy="41.4" r="1.24" fill="#c8c0b0"/><circle cx="25.2" cy="42.2" r="1.12" fill="#c8c0b0"/><circle cx="28.8" cy="46.8" r="1.22" fill="#c8c0b0"/><circle cx="27.4" cy="39.0" r="0.68" fill="#c8c0b0"/><circle cx="30.6" cy="36.9" r="1.09" fill="#e4ddd0"/><circle cx="15.8" cy="42.4" r="0.94" fill="#c8c0b0"/><circle cx="29.5" cy="45.3" r="0.65" fill="#a49c8e"/><circle cx="16.1" cy="39.0" r="1.03" fill="#d8d0c2"/><circle cx="23.2" cy="47.0" r="0.74" fill="#d8d0c2"/><circle cx="31.8" cy="40.6" r="0.77" fill="#d8d0c2"/><circle cx="28.3" cy="43.2" r="1.00" fill="#a49c8e"/><circle cx="28.7" cy="40.0" r="0.92" fill="#e4ddd0"/><circle cx="20.0" cy="31.3" r="1.01" fill="#a49c8e"/><circle cx="16.0" cy="33.1" r="0.93" fill="#e4ddd0"/><circle cx="21.8" cy="29.0" r="0.61" fill="#d8d0c2"/><circle cx="15.6" cy="38.9" r="0.82" fill="#d8d0c2"/><circle cx="32.6" cy="41.2" r="1.12" fill="#a49c8e"/><circle cx="28.1" cy="29.2" r="0.85" fill="#968e80"/><circle cx="33.8" cy="32.8" r="0.89" fill="#d8d0c2"/><circle cx="30.8" cy="32.5" r="1.04" fill="#968e80"/><circle cx="24.3" cy="38.7" r="0.65" fill="#d8d0c2"/><circle cx="18.0" cy="30.7" r="1.22" fill="#e4ddd0"/><circle cx="17.8" cy="43.3" r="1.01" fill="#968e80"/><circle cx="17.1" cy="39.6" r="0.96" fill="#c8c0b0"/><circle cx="33.8" cy="39.4" r="0.94" fill="#a49c8e"/><circle cx="28.9" cy="37.1" r="1.15" fill="#968e80"/><circle cx="25.2" cy="39.0" r="0.81" fill="#c8c0b0"/><circle cx="26.6" cy="41.8" r="1.23" fill="#968e80"/><circle cx="19.6" cy="38.1" r="0.88" fill="#e4ddd0"/><circle cx="27.6" cy="44.0" r="1.16" fill="#a49c8e"/><circle cx="30.3" cy="33.9" r="1.01" fill="#e4ddd0"/><circle cx="26.2" cy="41.4" r="0.85" fill="#d8d0c2"/><circle cx="22.5" cy="28.9" r="0.79" fill="#a49c8e"/><circle cx="31.1" cy="42.3" r="1.25" fill="#968e80"/><circle cx="19.2" cy="42.7" r="1.07" fill="#c8c0b0"/><circle cx="22.2" cy="38.8" r="0.62" fill="#c8c0b0"/><circle cx="34.4" cy="40.1" r="1.00" fill="#e4ddd0"/><circle cx="20.2" cy="32.2" r="1.05" fill="#968e80"/><circle cx="23.5" cy="38.4" r="1.18" fill="#a49c8e"/><circle cx="27.0" cy="29.6" r="1.29" fill="#d8d0c2"/><circle cx="16.7" cy="40.5" r="1.06" fill="#e4ddd0"/><circle cx="34.2" cy="36.0" r="0.74" fill="#968e80"/><circle cx="24.8" cy="46.1" r="1.13" fill="#c8c0b0"/><circle cx="24.1" cy="34.0" r="0.79" fill="#e4ddd0"/><circle cx="14.5" cy="35.7" r="0.95" fill="#a49c8e"/><circle cx="17.3" cy="43.3" r="1.23" fill="#d8d0c2"/><circle cx="16.2" cy="42.8" r="0.87" fill="#968e80"/><circle cx="16.6" cy="40.2" r="1.24" fill="#968e80"/><circle cx="16.5" cy="35.6" r="0.95" fill="#e4ddd0"/><circle cx="16.3" cy="39.8" r="0.74" fill="#d8d0c2"/><circle cx="27.7" cy="46.9" r="1.29" fill="#e4ddd0"/><circle cx="15.4" cy="36.0" r="0.82" fill="#d8d0c2"/><circle cx="23.3" cy="40.2" r="0.91" fill="#c8c0b0"/><circle cx="20.0" cy="40.4" r="1.24" fill="#a49c8e"/><circle cx="26.2" cy="35.7" r="1.16" fill="#a49c8e"/><circle cx="16.0" cy="36.4" r="1.24" fill="#968e80"/><circle cx="30.0" cy="43.5" r="1.11" fill="#968e80"/><circle cx="32.7" cy="35.7" r="1.26" fill="#d8d0c2"/><circle cx="25.6" cy="31.6" r="0.99" fill="#c8c0b0"/><circle cx="19.9" cy="32.7" r="1.19" fill="#c8c0b0"/><circle cx="24.8" cy="45.9" r="1.27" fill="#c8c0b0"/><circle cx="27.9" cy="46.6" r="1.28" fill="#c8c0b0"/><circle cx="24.1" cy="44.7" r="0.89" fill="#d8d0c2"/><circle cx="16.4" cy="37.9" r="0.62" fill="#d8d0c2"/><circle cx="18.1" cy="37.4" r="1.16" fill="#c8c0b0"/><circle cx="27.7" cy="40.0" r="0.72" fill="#c8c0b0"/><circle cx="14.7" cy="40.4" r="1.16" fill="#968e80"/><circle cx="24.3" cy="44.6" r="0.69" fill="#968e80"/><circle cx="34.1" cy="32.6" r="1.24" fill="#c8c0b0"/><circle cx="23.2" cy="41.8" r="1.03" fill="#e4ddd0"/><circle cx="32.1" cy="44.2" r="0.62" fill="#a49c8e"/><circle cx="25.9" cy="38.9" r="0.80" fill="#e4ddd0"/><circle cx="25.5" cy="44.8" r="0.95" fill="#c8c0b0"/><circle cx="31.0" cy="42.8" r="0.78" fill="#a49c8e"/><circle cx="22.0" cy="29.4" r="0.62" fill="#968e80"/><circle cx="29.2" cy="31.3" r="0.98" fill="#c8c0b0"/><circle cx="19.9" cy="32.7" r="1.20" fill="#c8c0b0"/><circle cx="21.6" cy="36.2" r="1.24" fill="#e4ddd0"/><circle cx="30.4" cy="34.9" r="0.82" fill="#a49c8e"/><circle cx="27.4" cy="47.4" r="1.22" fill="#a49c8e"/><circle cx="28.4" cy="35.8" r="0.66" fill="#968e80"/><circle cx="33.7" cy="43.0" r="0.90" fill="#a49c8e"/></g></g></svg>
<div class="t" style="left:232px;top:722.0px;font-size:14px;line-height:20px;color:#333333;font-weight:normal;">冬の果実セット</div>
<div class="t" style="left:232px;top:742.0px;font-size:14px;line-height:20px;color:#333333;font-weight:normal;letter-spacing:0.4px">12個（約1キロ）</div>
<div class="t" style="left:920px;top:718.5px;font-size:12px;line-height:17px;color:#333333;font-weight:normal;">ご覧いただきありがとうございます。</div>
<div class="t" style="left:924px;top:736.0px;font-size:12px;line-height:17px;color:#333333;font-weight:normal;">知多農園ゆみちゃんずファームで人気の..</div>
<div class="t" style="left:920px;top:753.5px;font-size:10px;line-height:14px;color:#1e9bf0;font-weight:normal;">詳細</div>
<svg style="left:0;top:0" width="1440" height="1094"><polyline points="945.9,758.2 950.1,762.2 954.3,758.2" fill="none" stroke="#1e9bf0" stroke-width="1.5"/></svg>
<div class="t" style="left:1256px;top:711.7px;font-size:14px;line-height:20px;color:#333333;font-weight:normal;">その他</div>
<div class="t" style="left:1256px;top:731.7px;font-size:14px;line-height:20px;color:#333333;font-weight:normal;">&gt; 食品</div>
<div class="t" style="left:1256px;top:751.7px;font-size:14px;line-height:20px;color:#333333;font-weight:normal;">&gt; 野菜</div>
<div class="t" style="left:1420px;top:733.8px;font-size:15px;line-height:20px;color:#555;font-weight:normal;">-</div>
<div class="t" style="left:232px;top:805.9px;font-size:12px;line-height:17px;color:#333333;font-weight:normal;letter-spacing:0.75px">fkejnajdhnckkeifjg</div>
<div class="t" style="left:232px;top:822.9px;font-size:12px;line-height:17px;color:#333333;font-weight:normal;letter-spacing:0.75px">htnskdjfhtn</div>
<div class="t" style="left:408px;top:811.7px;font-size:15px;line-height:21px;color:#333333;font-weight:normal;">みかん</div>
<div class="box" style="left:548px;top:812.2px;width:21px;height:21px;border-radius:3px;background:#e5fbdf"></div>
<div class="t" style="left:547px;top:812.2px;width:21px;text-align:center;font-size:14px;line-height:21px;font-weight:bold;color:#00a600;letter-spacing:-0.6px">+1</div>
<div class="t" style="right:804px;top:811.7px;font-size:15px;line-height:21px;color:#333333;font-weight:normal;text-align:right;letter-spacing:0.3px">10</div>
<div class="t" style="left:666.5px;top:811.7px;font-size:15px;line-height:21px;color:#333333;font-weight:normal;letter-spacing:0.55px">¥<span style="margin-left:3px">2000</span></div>
<div class="t" style="left:795px;top:811.7px;font-size:15px;line-height:21px;color:#333333;font-weight:normal;letter-spacing:0.55px">¥<span style="margin-left:3px">700</span></div>
<div class="t" style="left:232px;top:877.9px;font-size:12px;line-height:17px;color:#333333;font-weight:normal;letter-spacing:0.75px">fkejnajdhnckkeifjg</div>
<div class="t" style="left:232px;top:894.9px;font-size:12px;line-height:17px;color:#333333;font-weight:normal;letter-spacing:0.75px">htnskdjfhtn</div>
<div class="t" style="left:408px;top:883.7px;font-size:15px;line-height:21px;color:#00a600;font-weight:bold;">りんご</div>
<div class="box" style="left:548px;top:884.2px;width:21px;height:21px;border-radius:3px;background:#fdf0f0"></div>
<div class="t" style="left:547.8px;top:884.2px;width:21px;text-align:center;font-size:14px;line-height:21px;font-weight:bold;color:#e0141e;letter-spacing:0.3px">-2</div>
<div class="t" style="right:804px;top:883.7px;font-size:15px;line-height:21px;color:#333333;font-weight:normal;text-align:right;letter-spacing:0.3px">8</div>
<div class="t" style="left:666.5px;top:883.7px;font-size:15px;line-height:21px;color:#333333;font-weight:normal;letter-spacing:0.55px">¥<span style="margin-left:3px">2000</span></div>
<div class="t" style="left:795px;top:883.7px;font-size:15px;line-height:21px;color:#333333;font-weight:normal;letter-spacing:0.55px">¥<span style="margin-left:3px">700</span></div>
<div class="t" style="left:232px;top:950.2px;font-size:12px;line-height:17px;color:#333333;font-weight:normal;letter-spacing:0.75px">fkejnajdhnckkeifjg</div>
<div class="t" style="left:232px;top:967.2px;font-size:12px;line-height:17px;color:#333333;font-weight:normal;letter-spacing:0.75px">htnskdjfhtn</div>
<div class="t" style="left:408px;top:956.0px;font-size:15px;line-height:21px;color:#00a600;font-weight:bold;">レモン</div>
<div class="box" style="left:548px;top:956.5px;width:21px;height:21px;border-radius:3px;background:#e5fbdf"></div>
<div class="t" style="left:547px;top:956.5px;width:21px;text-align:center;font-size:14px;line-height:21px;font-weight:bold;color:#00a600;letter-spacing:-0.6px">+1</div>
<div class="t" style="right:804px;top:956.0px;font-size:15px;line-height:21px;color:#333333;font-weight:normal;text-align:right;letter-spacing:0.3px">11</div>
<div class="t" style="left:666.5px;top:956.0px;font-size:15px;line-height:21px;color:#333333;font-weight:normal;letter-spacing:0.55px">¥<span style="margin-left:3px">2000</span></div>
<div class="t" style="left:795px;top:956.0px;font-size:15px;line-height:21px;color:#333333;font-weight:normal;letter-spacing:0.55px">¥<span style="margin-left:3px">700</span></div>
<div class="box" style="left:48px;top:1015px;width:1344px;height:1px;background:#dcdcdc;"></div>
<div class="t" style="left:57px;top:1053.5px;font-size:14px;line-height:20px;color:#333333;font-weight:normal;">公開</div>
<svg style="left:144px;top:1040px" width="48" height="48" viewBox="0 0 48 48">
<defs><clipPath id="c1441040"><rect width="48" height="48" rx="3.5"/></clipPath><filter id="b1441040" x="-20%" y="-20%" width="140%" height="140%"><feGaussianBlur stdDeviation="0.45"/></filter></defs>
<g clip-path="url(#c1441040)"><g filter="url(#b1441040)"><rect width="48" height="48" fill="#242a2f"/><rect x="0" y="5" width="7" height="25" fill="#323c45"/><rect x="0.5" y="10" width="4.5" height="4" fill="#46505a"/><path d="M11.6 0.5 L12.6 1 L8.5 14 L6 26.5 L5 26 L7.5 13.5 Z" fill="#6e5440"/><rect x="5" y="18" width="7" height="9" fill="#352b28"/><path d="M19 1.2 Q32 -0.5 44 0.8 Q48.5 2 47.5 5.5 Q46 7.5 43 6.5 Q32 4.2 23 4 Q19 3.5 19 1.2 Z" fill="#dcbc00"/><path d="M16.5 5 Q23 3.8 30 4.5 L30.5 8.3 Q23 9.2 16.5 8.4 Q15.5 6.7 16.5 5 Z" fill="#e4c200"/><rect x="10.5" y="5.8" width="6.5" height="2.2" fill="#456e3c"/><circle cx="15" cy="11.3" r="3.7" fill="#774a63"/><circle cx="24.5" cy="12.2" r="4" fill="#654350"/><circle cx="10.8" cy="15.6" r="3.4" fill="#76445f"/><path d="M40 7 L48 6 L48 21 L41 21 Z" fill="#7a889c"/><path d="M27.8 4 Q36 3 39.5 6 Q41.5 12 40.5 18 Q40 25 36 28.5 L29 28.5 Q27 20 27.8 11 Z" fill="#88aa62"/><circle cx="34.3" cy="24.1" r="0.80" fill="#7ca05a"/><circle cx="33.0" cy="14.0" r="0.51" fill="#7ca05a"/><circle cx="33.8" cy="21.3" r="1.30" fill="#7ca05a"/><circle cx="30.1" cy="13.9" r="0.82" fill="#6e9450"/><circle cx="34.2" cy="20.3" r="1.24" fill="#7ca05a"/><circle cx="33.8" cy="7.0" r="0.55" fill="#a8c886"/><circle cx="33.7" cy="17.8" r="1.19" fill="#7ca05a"/><circle cx="29.6" cy="10.1" r="0.81" fill="#7ca05a"/><circle cx="30.1" cy="22.0" r="0.86" fill="#6e9450"/><circle cx="35.2" cy="13.6" r="0.61" fill="#6e9450"/><circle cx="33.8" cy="25.0" r="1.12" fill="#b8d49a"/><circle cx="29.6" cy="20.8" r="0.96" fill="#7ca05a"/><circle cx="29.5" cy="10.7" r="1.05" fill="#a8c886"/><circle cx="37.4" cy="7.4" r="1.04" fill="#6e9450"/><circle cx="33.0" cy="10.0" r="0.93" fill="#a8c886"/><circle cx="33.4" cy="11.1" r="1.17" fill="#b8d49a"/><circle cx="33.7" cy="18.7" r="1.18" fill="#7ca05a"/><circle cx="38.2" cy="21.2" r="0.83" fill="#6e9450"/><circle cx="37.6" cy="16.9" r="0.83" fill="#a8c886"/><circle cx="38.1" cy="18.4" r="0.54" fill="#b8d49a"/><circle cx="29.0" cy="12.7" r="0.72" fill="#6e9450"/><circle cx="37.1" cy="15.9" r="0.56" fill="#a8c886"/><circle cx="39.1" cy="12.6" r="0.73" fill="#b8d49a"/><circle cx="34.6" cy="17.9" r="1.19" fill="#b8d49a"/><circle cx="32.7" cy="19.1" r="1.19" fill="#7ca05a"/><circle cx="30.2" cy="18.0" r="1.02" fill="#a8c886"/><circle cx="30.1" cy="8.7" r="0.91" fill="#7ca05a"/><circle cx="30.9" cy="9.0" r="1.25" fill="#7ca05a"/><circle cx="37.9" cy="14.9" r="0.94" fill="#a8c886"/><circle cx="35.3" cy="5.4" r="0.75" fill="#7ca05a"/><circle cx="30.7" cy="10.2" r="0.55" fill="#b8d49a"/><circle cx="29.6" cy="17.9" r="0.78" fill="#b8d49a"/><circle cx="33.9" cy="14.4" r="0.55" fill="#a8c886"/><circle cx="36.7" cy="14.7" r="0.87" fill="#b8d49a"/><circle cx="35.0" cy="20.3" r="1.11" fill="#b8d49a"/><circle cx="32.9" cy="22.4" r="1.12" fill="#a8c886"/><circle cx="38.5" cy="14.4" r="0.61" fill="#6e9450"/><circle cx="32.4" cy="11.3" r="0.76" fill="#7ca05a"/><circle cx="33.0" cy="13.2" r="0.98" fill="#b8d49a"/><circle cx="32.8" cy="11.4" r="1.15" fill="#6e9450"/><path d="M38.5 6 L44.5 7 L43.5 10.5 L39 11 Z" fill="#4a7840"/><circle cx="19.3" cy="21.6" r="7.1" fill="#5e7e56"/><circle cx="15.3" cy="17.7" r="1.06" fill="#7e9c72"/><circle cx="22.4" cy="16.8" r="0.67" fill="#7e9c72"/><circle cx="21.1" cy="20.3" r="0.83" fill="#4c6a46"/><circle cx="17.8" cy="23.0" r="0.67" fill="#4c6a46"/><circle cx="17.0" cy="23.1" r="1.11" fill="#5a7a50"/><circle cx="22.4" cy="26.5" r="0.60" fill="#5a7a50"/><circle cx="19.5" cy="21.8" r="1.11" fill="#4c6a46"/><circle cx="20.2" cy="15.3" r="0.62" fill="#4c6a46"/><circle cx="17.7" cy="27.8" r="0.88" fill="#4c6a46"/><circle cx="22.0" cy="27.4" r="0.64" fill="#5a7a50"/><circle cx="18.1" cy="25.3" r="0.62" fill="#4c6a46"/><circle cx="19.0" cy="25.3" r="1.07" fill="#7e9c72"/><circle cx="14.8" cy="18.5" r="0.55" fill="#8aa880"/><circle cx="21.2" cy="17.5" r="0.72" fill="#5a7a50"/><circle cx="16.6" cy="22.1" r="0.68" fill="#7e9c72"/><circle cx="23.0" cy="20.4" r="0.78" fill="#5a7a50"/><circle cx="16.0" cy="25.3" r="0.51" fill="#7e9c72"/><circle cx="18.0" cy="16.6" r="1.17" fill="#7e9c72"/><circle cx="19.5" cy="15.3" r="1.16" fill="#8aa880"/><circle cx="13.2" cy="21.1" r="0.68" fill="#5a7a50"/><circle cx="23.7" cy="25.1" r="1.06" fill="#8aa880"/><circle cx="25.5" cy="23.0" r="0.56" fill="#8aa880"/><circle cx="15.4" cy="21.3" r="0.60" fill="#8aa880"/><circle cx="23.6" cy="19.4" r="0.72" fill="#8aa880"/><circle cx="17.3" cy="27.1" r="0.94" fill="#8aa880"/><circle cx="21.9" cy="21.5" r="0.53" fill="#5a7a50"/><circle cx="24.8" cy="22.7" r="0.74" fill="#8aa880"/><circle cx="15.2" cy="22.8" r="0.54" fill="#7e9c72"/><circle cx="20.5" cy="18.0" r="0.64" fill="#4c6a46"/><circle cx="15.4" cy="17.4" r="0.57" fill="#5a7a50"/><circle cx="18.2" cy="22.7" r="0.79" fill="#4c6a46"/><circle cx="13.1" cy="23.5" r="1.10" fill="#5a7a50"/><circle cx="24.5" cy="20.3" r="0.72" fill="#8aa880"/><circle cx="18.2" cy="25.6" r="0.60" fill="#5a7a50"/><circle cx="21.4" cy="17.3" r="0.63" fill="#5a7a50"/><circle cx="21.2" cy="19.6" r="0.84" fill="#8aa880"/><circle cx="24.6" cy="23.8" r="0.75" fill="#7e9c72"/><circle cx="19.5" cy="17.7" r="0.99" fill="#8aa880"/><circle cx="21.0" cy="18.7" r="1.19" fill="#8aa880"/><circle cx="23.0" cy="20.6" r="0.63" fill="#7e9c72"/><circle cx="13.7" cy="22.5" r="0.73" fill="#8aa880"/><circle cx="13.6" cy="23.0" r="0.95" fill="#8aa880"/><circle cx="16.3" cy="25.9" r="1.02" fill="#5a7a50"/><circle cx="15.8" cy="26.4" r="1.11" fill="#5a7a50"/><circle cx="25.6" cy="20.6" r="0.86" fill="#4c6a46"/><circle cx="7.8" cy="34" r="6.7" fill="#8c9e86"/><circle cx="6.8" cy="36.1" r="0.89" fill="#a8b8a0"/><circle cx="8.6" cy="32.3" r="0.85" fill="#6e8468"/><circle cx="11.6" cy="34.9" r="0.54" fill="#a8b8a0"/><circle cx="6.4" cy="33.5" r="0.84" fill="#6e8468"/><circle cx="4.7" cy="30.6" r="0.54" fill="#7c9274"/><circle cx="10.5" cy="34.9" r="0.83" fill="#6e8468"/><circle cx="7.2" cy="36.2" r="0.57" fill="#b4c4ac"/><circle cx="3.2" cy="32.2" r="0.56" fill="#6e8468"/><circle cx="4.7" cy="37.2" r="0.54" fill="#a8b8a0"/><circle cx="4.7" cy="31.1" r="0.82" fill="#b4c4ac"/><circle cx="2.2" cy="35.2" r="0.72" fill="#6e8468"/><circle cx="9.2" cy="29.2" r="0.65" fill="#b4c4ac"/><circle cx="2.3" cy="33.1" r="0.94" fill="#b4c4ac"/><circle cx="6.5" cy="33.0" r="0.81" fill="#6e8468"/><circle cx="7.9" cy="31.7" r="0.79" fill="#a8b8a0"/><circle cx="9.4" cy="33.6" r="0.83" fill="#b4c4ac"/><circle cx="5.9" cy="37.0" r="0.80" fill="#7c9274"/><circle cx="9.5" cy="34.8" r="0.66" fill="#a8b8a0"/><circle cx="12.5" cy="35.9" r="0.89" fill="#7c9274"/><circle cx="7.0" cy="37.6" r="0.90" fill="#a8b8a0"/><circle cx="11.1" cy="32.7" r="0.87" fill="#7c9274"/><circle cx="12.7" cy="35.9" r="0.58" fill="#6e8468"/><circle cx="3.2" cy="37.4" r="0.80" fill="#6e8468"/><circle cx="3.6" cy="35.4" r="1.03" fill="#7c9274"/><circle cx="9.9" cy="31.6" r="0.75" fill="#b4c4ac"/><circle cx="6.3" cy="30.6" r="0.64" fill="#a8b8a0"/><circle cx="9.1" cy="36.6" r="0.64" fill="#7c9274"/><circle cx="9.0" cy="31.8" r="0.67" fill="#6e8468"/><circle cx="4.6" cy="35.8" r="0.84" fill="#6e8468"/><circle cx="6.2" cy="30.0" r="0.87" fill="#a8b8a0"/><circle cx="2.4" cy="35.5" r="1.07" fill="#7c9274"/><circle cx="4.8" cy="36.3" r="0.79" fill="#7c9274"/><circle cx="9.2" cy="34.6" r="0.63" fill="#6e8468"/><circle cx="11.4" cy="37.0" r="0.56" fill="#6e8468"/><circle cx="2.1" cy="32.7" r="0.87" fill="#a8b8a0"/><circle cx="11.1" cy="30.7" r="0.59" fill="#b4c4ac"/><circle cx="12.3" cy="32.7" r="0.78" fill="#a8b8a0"/><circle cx="11.3" cy="29.1" r="0.78" fill="#7c9274"/><circle cx="6.9" cy="36.1" r="0.95" fill="#b4c4ac"/><circle cx="2.9" cy="34.7" r="0.81" fill="#6e8468"/><path d="M34 26 L40.5 25.8 L40 30 L35 30.5 Z" fill="#5a8a3c"/><path d="M35.5 20.5 Q43 19 48 20.5 L48 38 Q46 44 44 46 L40 46 Q37 40 37.5 33 Q35 27 35.5 20.5 Z" fill="#d4b200"/><path d="M38 34 Q44 33 47 36 L45 46 L40 46 Q38 40 38 34 Z" fill="#b0940e"/><path d="M38.5 22 Q43 21.5 45.5 23 L44.5 28 Q41 27.5 38.5 26.5 Z" fill="#ecd030"/><ellipse cx="25.2" cy="38" rx="12.1" ry="10.3" fill="#b8b0a0"/><circle cx="17.1" cy="40.1" r="1.25" fill="#968e80"/><circle cx="15.2" cy="40.6" r="0.73" fill="#c8c0b0"/><circle cx="16.4" cy="39.1" r="0.73" fill="#968e80"/><circle cx="24.1" cy="40.7" r="1.17" fill="#d8d0c2"/><circle cx="19.3" cy="34.6" r="0.92" fill="#c8c0b0"/><circle cx="20.0" cy="31.9" r="1.18" fill="#d8d0c2"/><circle cx="29.8" cy="39.5" r="0.77" fill="#d8d0c2"/><circle cx="26.3" cy="32.6" r="1.01" fill="#a49c8e"/><circle cx="16.2" cy="37.1" r="0.95" fill="#d8d0c2"/><circle cx="19.5" cy="39.3" r="1.30" fill="#d8d0c2"/><circle cx="23.5" cy="32.8" r="0.76" fill="#e4ddd0"/><circle cx="33.5" cy="39.3" r="0.68" fill="#d8d0c2"/><circle cx="29.2" cy="33.1" r="1.27" fill="#d8d0c2"/><circle cx="27.7" cy="47.0" r="0.64" fill="#968e80"/><circle cx="32.3" cy="37.3" r="0.65" fill="#a49c8e"/><circle cx="26.2" cy="33.1" r="0.66" fill="#e4ddd0"/><circle cx="32.4" cy="38.6" r="1.25" fill="#a49c8e"/><circle cx="25.3" cy="41.1" r="0.64" fill="#968e80"/><circle cx="28.9" cy="44.5" r="0.91" fill="#a49c8e"/><circle cx="35.1" cy="37.2" r="0.89" fill="#968e80"/><circle cx="30.7" cy="42.2" r="0.75" fill="#e4ddd0"/><circle cx="32.5" cy="30.9" r="1.01" fill="#d8d0c2"/><circle cx="26.9" cy="43.8" r="1.20" fill="#c8c0b0"/><circle cx="34.3" cy="43.6" r="0.75" fill="#e4ddd0"/><circle cx="34.0" cy="38.5" r="1.18" fill="#968e80"/><circle cx="28.2" cy="39.3" r="1.01" fill="#a49c8e"/><circle cx="32.0" cy="38.6" r="1.04" fill="#a49c8e"/><circle cx="32.8" cy="36.3" r="1.00" fill="#968e80"/><circle cx="27.0" cy="41.4" r="1.24" fill="#c8c0b0"/><circle cx="25.2" cy="42.2" r="1.12" fill="#c8c0b0"/><circle cx="28.8" cy="46.8" r="1.22" fill="#c8c0b0"/><circle cx="27.4" cy="39.0" r="0.68" fill="#c8c0b0"/><circle cx="30.6" cy="36.9" r="1.09" fill="#e4ddd0"/><circle cx="15.8" cy="42.4" r="0.94" fill="#c8c0b0"/><circle cx="29.5" cy="45.3" r="0.65" fill="#a49c8e"/><circle cx="16.1" cy="39.0" r="1.03" fill="#d8d0c2"/><circle cx="23.2" cy="47.0" r="0.74" fill="#d8d0c2"/><circle cx="31.8" cy="40.6" r="0.77" fill="#d8d0c2"/><circle cx="28.3" cy="43.2" r="1.00" fill="#a49c8e"/><circle cx="28.7" cy="40.0" r="0.92" fill="#e4ddd0"/><circle cx="20.0" cy="31.3" r="1.01" fill="#a49c8e"/><circle cx="16.0" cy="33.1" r="0.93" fill="#e4ddd0"/><circle cx="21.8" cy="29.0" r="0.61" fill="#d8d0c2"/><circle cx="15.6" cy="38.9" r="0.82" fill="#d8d0c2"/><circle cx="32.6" cy="41.2" r="1.12" fill="#a49c8e"/><circle cx="28.1" cy="29.2" r="0.85" fill="#968e80"/><circle cx="33.8" cy="32.8" r="0.89" fill="#d8d0c2"/><circle cx="30.8" cy="32.5" r="1.04" fill="#968e80"/><circle cx="24.3" cy="38.7" r="0.65" fill="#d8d0c2"/><circle cx="18.0" cy="30.7" r="1.22" fill="#e4ddd0"/><circle cx="17.8" cy="43.3" r="1.01" fill="#968e80"/><circle cx="17.1" cy="39.6" r="0.96" fill="#c8c0b0"/><circle cx="33.8" cy="39.4" r="0.94" fill="#a49c8e"/><circle cx="28.9" cy="37.1" r="1.15" fill="#968e80"/><circle cx="25.2" cy="39.0" r="0.81" fill="#c8c0b0"/><circle cx="26.6" cy="41.8" r="1.23" fill="#968e80"/><circle cx="19.6" cy="38.1" r="0.88" fill="#e4ddd0"/><circle cx="27.6" cy="44.0" r="1.16" fill="#a49c8e"/><circle cx="30.3" cy="33.9" r="1.01" fill="#e4ddd0"/><circle cx="26.2" cy="41.4" r="0.85" fill="#d8d0c2"/><circle cx="22.5" cy="28.9" r="0.79" fill="#a49c8e"/><circle cx="31.1" cy="42.3" r="1.25" fill="#968e80"/><circle cx="19.2" cy="42.7" r="1.07" fill="#c8c0b0"/><circle cx="22.2" cy="38.8" r="0.62" fill="#c8c0b0"/><circle cx="34.4" cy="40.1" r="1.00" fill="#e4ddd0"/><circle cx="20.2" cy="32.2" r="1.05" fill="#968e80"/><circle cx="23.5" cy="38.4" r="1.18" fill="#a49c8e"/><circle cx="27.0" cy="29.6" r="1.29" fill="#d8d0c2"/><circle cx="16.7" cy="40.5" r="1.06" fill="#e4ddd0"/><circle cx="34.2" cy="36.0" r="0.74" fill="#968e80"/><circle cx="24.8" cy="46.1" r="1.13" fill="#c8c0b0"/><circle cx="24.1" cy="34.0" r="0.79" fill="#e4ddd0"/><circle cx="14.5" cy="35.7" r="0.95" fill="#a49c8e"/><circle cx="17.3" cy="43.3" r="1.23" fill="#d8d0c2"/><circle cx="16.2" cy="42.8" r="0.87" fill="#968e80"/><circle cx="16.6" cy="40.2" r="1.24" fill="#968e80"/><circle cx="16.5" cy="35.6" r="0.95" fill="#e4ddd0"/><circle cx="16.3" cy="39.8" r="0.74" fill="#d8d0c2"/><circle cx="27.7" cy="46.9" r="1.29" fill="#e4ddd0"/><circle cx="15.4" cy="36.0" r="0.82" fill="#d8d0c2"/><circle cx="23.3" cy="40.2" r="0.91" fill="#c8c0b0"/><circle cx="20.0" cy="40.4" r="1.24" fill="#a49c8e"/><circle cx="26.2" cy="35.7" r="1.16" fill="#a49c8e"/><circle cx="16.0" cy="36.4" r="1.24" fill="#968e80"/><circle cx="30.0" cy="43.5" r="1.11" fill="#968e80"/><circle cx="32.7" cy="35.7" r="1.26" fill="#d8d0c2"/><circle cx="25.6" cy="31.6" r="0.99" fill="#c8c0b0"/><circle cx="19.9" cy="32.7" r="1.19" fill="#c8c0b0"/><circle cx="24.8" cy="45.9" r="1.27" fill="#c8c0b0"/><circle cx="27.9" cy="46.6" r="1.28" fill="#c8c0b0"/><circle cx="24.1" cy="44.7" r="0.89" fill="#d8d0c2"/><circle cx="16.4" cy="37.9" r="0.62" fill="#d8d0c2"/><circle cx="18.1" cy="37.4" r="1.16" fill="#c8c0b0"/><circle cx="27.7" cy="40.0" r="0.72" fill="#c8c0b0"/><circle cx="14.7" cy="40.4" r="1.16" fill="#968e80"/><circle cx="24.3" cy="44.6" r="0.69" fill="#968e80"/><circle cx="34.1" cy="32.6" r="1.24" fill="#c8c0b0"/><circle cx="23.2" cy="41.8" r="1.03" fill="#e4ddd0"/><circle cx="32.1" cy="44.2" r="0.62" fill="#a49c8e"/><circle cx="25.9" cy="38.9" r="0.80" fill="#e4ddd0"/><circle cx="25.5" cy="44.8" r="0.95" fill="#c8c0b0"/><circle cx="31.0" cy="42.8" r="0.78" fill="#a49c8e"/><circle cx="22.0" cy="29.4" r="0.62" fill="#968e80"/><circle cx="29.2" cy="31.3" r="0.98" fill="#c8c0b0"/><circle cx="19.9" cy="32.7" r="1.20" fill="#c8c0b0"/><circle cx="21.6" cy="36.2" r="1.24" fill="#e4ddd0"/><circle cx="30.4" cy="34.9" r="0.82" fill="#a49c8e"/><circle cx="27.4" cy="47.4" r="1.22" fill="#a49c8e"/><circle cx="28.4" cy="35.8" r="0.66" fill="#968e80"/><circle cx="33.7" cy="43.0" r="0.90" fill="#a49c8e"/></g></g></svg>
<div class="box" style="left:200px;top:1040px;width:12px;height:12px;border-radius:6px;background:#00a600"></div>
<div class="t" style="left:232px;top:1043.9px;font-size:14px;line-height:20px;color:#333333;font-weight:normal;">国産柑橘セット</div>
<div class="t" style="left:232px;top:1063.9px;font-size:14px;line-height:20px;color:#333333;font-weight:normal;letter-spacing:0.4px">12個（約1キロ）</div>
<div class="t" style="left:920px;top:1038.5px;font-size:12px;line-height:17px;color:#00a600;font-weight:bold;">ご覧いただきありがとうございます。</div>
<div class="t" style="left:924px;top:1056.0px;font-size:12px;line-height:17px;color:#00a600;font-weight:bold;">知多農園ゆみちゃんずファームで人気の..</div>
<div class="t" style="left:920px;top:1076.3px;font-size:10px;line-height:14px;color:#1e9bf0;font-weight:normal;">詳細</div>
<svg style="left:0;top:0" width="1440" height="1094"><polyline points="945.9,1081.0 950.1,1085.0 954.3,1081.0" fill="none" stroke="#1e9bf0" stroke-width="1.5"/></svg>
<div class="t" style="left:1256px;top:1032.2px;font-size:14px;line-height:20px;color:#333333;font-weight:normal;">その他</div>
<div class="t" style="left:1256px;top:1052.2px;font-size:14px;line-height:20px;color:#333333;font-weight:normal;">&gt; 食品</div>
<div class="t" style="left:1256px;top:1072.2px;font-size:14px;line-height:20px;color:#333333;font-weight:normal;">&gt; 野菜</div>
<div class="t" style="left:1420px;top:1054.3px;font-size:15px;line-height:20px;color:#555;font-weight:normal;">-</div>
<div class="box" style="left:288px;top:1062px;width:1104px;height:8px;background:#eeeeee;border-radius:0 4px 4px 0;"></div>
<div class="box" style="left:288px;top:1062px;width:442px;height:8px;background:#666666;border-radius:4px;"></div>
<div class="box" style="left:0;top:1093px;width:1440px;height:1px;background:#dcdcdc;"></div>
<div class="box" style="left:1439px;top:0;width:1px;height:1094px;background:#dcdcdc;"></div>
</body></html>
